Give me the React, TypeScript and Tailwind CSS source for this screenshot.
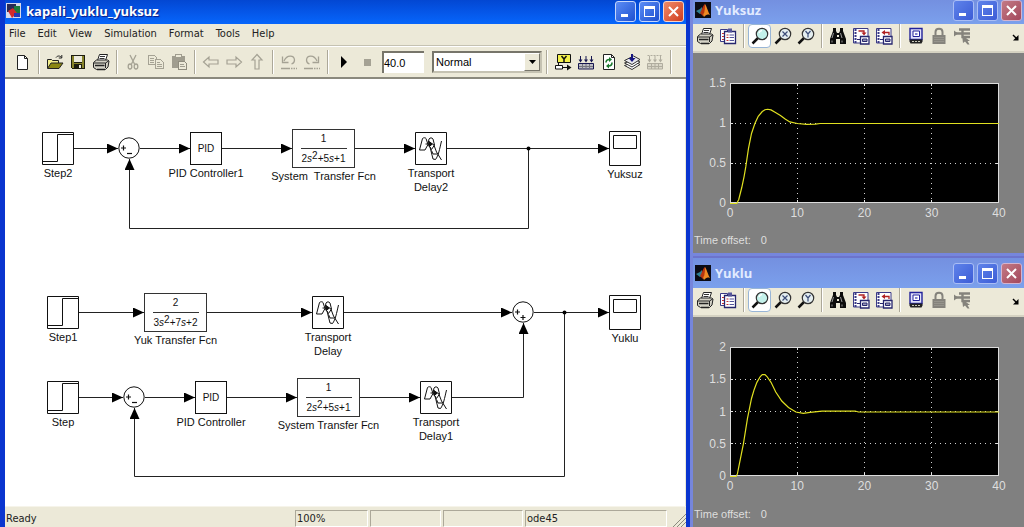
import React, { useState } from "react";
import clsx from "clsx";

type Point = [number, number];

/* ---------- shared bits ---------- */

function Icon({ children, crisp = true }: { children: React.ReactNode; crisp?: boolean }) {
  return (
    <svg
      width="18"
      height="18"
      viewBox="0 0 18 18"
      fill="none"
      aria-hidden="true"
      shapeRendering={crisp ? "crispEdges" : "auto"}
    >
      {children}
    </svg>
  );
}

function ToolButton({
  label,
  pressed = false,
  disabled = false,
  onClick,
  children,
}: {
  label: string;
  pressed?: boolean;
  disabled?: boolean;
  onClick?: () => void;
  children: React.ReactNode;
}) {
  return (
    <button
      type="button"
      title={label}
      aria-label={label}
      disabled={disabled}
      onClick={onClick}
      className={clsx(
        "flex h-6 w-[23px] shrink-0 items-center justify-center",
        pressed && "rounded-sm border border-[#98b5d6] bg-white"
      )}
    >
      {children}
    </button>
  );
}

function Separator() {
  return (
    <div className="flex h-6 w-[9px] shrink-0 justify-center">
      <div className="w-px bg-[#aca899]" />
      <div className="w-px bg-white" />
    </div>
  );
}

function CaptionButtons({ active }: { active: boolean }) {
  const base = "flex size-[21px] items-center justify-center rounded-[3px] border";
  const blue = active
    ? "border-[#c5d6fb] bg-linear-to-br from-[#5b8cf5] to-[#1f4fd0]"
    : "border-[#a9bdf5] bg-linear-to-br from-[#5f83ea] to-[#3d5cd6]";
  const red = active
    ? "border-[#f7d3c8] bg-linear-to-br from-[#f08a68] to-[#cf3a1c]"
    : "border-[#d3b4cf] bg-linear-to-br from-[#c37a86] to-[#a3485c]";
  return (
    <div className="flex gap-[3px]">
      <button type="button" aria-label="Minimize" className={clsx(base, blue)}>
        <svg width="13" height="13" viewBox="0 0 13 13" aria-hidden="true">
          <path d="M2 9h7v3H2z" fill="#fff" />
        </svg>
      </button>
      <button type="button" aria-label="Maximize" className={clsx(base, blue)}>
        <svg width="13" height="13" viewBox="0 0 13 13" aria-hidden="true">
          <path d="M1 1h11v11H1zM2 4v7h9V4z" fill="#fff" fillRule="evenodd" />
        </svg>
      </button>
      <button type="button" aria-label="Close" className={clsx(base, red)}>
        <svg width="13" height="13" viewBox="0 0 13 13" aria-hidden="true">
          <path d="M2 2l9 9M11 2l-9 9" stroke="#fff" strokeWidth="2" />
        </svg>
      </button>
    </div>
  );
}

/* ---------- model toolbar icons ---------- */

const NewIcon = () => (
  <Icon crisp={false}>
    <path d="M3.500 2.500h7l3 3v11h-10z" fill="#fff" stroke="#222" />
    <path d="M10.500 2.500v3h3" stroke="#222" />
  </Icon>
);

const OpenIcon = () => (
  <Icon crisp={false}>
    <path d="M1.500 15V6.500h4l1 1h6V10" fill="#f3ee8a" stroke="#222" />
    <path d="M1.500 15.500l3.500-5.500h12l-4 5.500z" fill="#8b8712" stroke="#222" />
    <path d="M10 4.500c1.500-2 4-2 5.500 0M15.800 2v3h-3" stroke="#222" />
  </Icon>
);

const SaveIcon = () => (
  <Icon>
    <path d="M2 2h14v14H3l-1-1z" fill="#1c1c10" />
    <path d="M3 3h2v7h8V3h2v12H3z" fill="#87842a" />
    <path d="M5 3h8v6H5z" fill="#eceadd" />
    <path d="M5 11h8v4H5z" fill="#1c1c10" />
    <path d="M10 12h2v3h-2z" fill="#eceadd" />
  </Icon>
);

const PrintIcon = () => (
  <Icon crisp={false}>
    <path d="M5.500 7.500l2-6h8l-2 6z" fill="#fff" stroke="#222" />
    <path d="M8 3.500h5M7.500 5.500h5" stroke="#333" />
    <path d="M1.500 9.500l3-2.500h11l1.500 1-1 6-2.500 2.500h-9l-3-2z" fill="#d4d2c6" stroke="#222" />
    <path d="M2 10h11.500v5M13.500 10l3-2" stroke="#222" />
    <path d="M3 12.500h9.500" stroke="#222" strokeWidth="1.500" />
    <path d="M5 16.500h8" stroke="#222" strokeWidth="1.500" />
  </Icon>
);

const CutIcon = () => (
  <Icon crisp={false}>
    <path d="M6 2l4.500 9M12 2L7.500 11" stroke="#a5a294" strokeWidth="1.300" />
    <ellipse cx="6" cy="13.500" rx="1.800" ry="2.500" stroke="#a5a294" strokeWidth="1.300" />
    <ellipse cx="12" cy="13.500" rx="1.800" ry="2.500" stroke="#a5a294" strokeWidth="1.300" />
  </Icon>
);

const CopyIcon = () => (
  <Icon>
    <path d="M1.500 2.500h6l2 2v7h-8z" stroke="#a5a294" />
    <path d="M8.500 6.500h5l3 3v6h-8z" fill="#ece9d8" stroke="#a5a294" />
    <path d="M3 5.500h4M3 7.500h4M3 9.500h4M10 9.500h3M10 11.500h5M10 13.500h5" stroke="#a5a294" />
  </Icon>
);

const PasteIcon = () => (
  <Icon>
    <path d="M2 3h13v12H2z" fill="#a09d8f" />
    <path d="M5.500 1.500h6v3h-6z" fill="#ece9d8" stroke="#a09d8f" />
    <path d="M8.500 8.500h6l2 2v6h-8z" fill="#ece9d8" stroke="#8f8c7e" />
    <path d="M10 11.500h4M10 13.500h5" stroke="#a09d8f" />
  </Icon>
);

const ArrowIcon = ({ turn }: { turn: number }) => (
  <Icon crisp={false}>
    <path
      d="M1.500 9l5.500-5v3h9v4H7v3z"
      stroke="#a5a294"
      strokeWidth="1.200"
      transform={`rotate(${turn} 9 9)`}
    />
  </Icon>
);

const UndoIcon = ({ flip = false }: { flip?: boolean }) => (
  <Icon crisp={false}>
    <g transform={flip ? "matrix(-1 0 0 1 18 0)" : undefined}>
      <path d="M4 8C7 1.500 14 2 14.500 7c0 2.500-1.500 3.500-3 4" stroke="#a5a294" strokeWidth="1.300" />
      <path d="M2.500 3.500v6h6" stroke="#a5a294" strokeWidth="1.300" />
    </g>
    <path d="M1 15.500h9" stroke="#a5a294" strokeWidth="1.500" />
    <path d="M11 15.500h6" stroke="#a5a294" strokeWidth="1.500" strokeDasharray="1.500 1" />
  </Icon>
);

const PlayIcon = () => (
  <Icon crisp={false}>
    <path d="M6 3l6 6-6 6z" fill="#000" />
  </Icon>
);

const StopIcon = () => (
  <Icon>
    <path d="M6 6h7v7H6z" fill="#a5a294" />
  </Icon>
);

const ModelBrowserIcon = () => (
  <Icon crisp={false}>
    <path d="M3.500 1.500h13v8h-13z" fill="#f3f04a" stroke="#111" />
    <path d="M7.500 3l2.500 3 2.500-3M10 6v3" stroke="#111" strokeWidth="1.500" />
    <path d="M1.500 12.500h7v3.500h-7z" fill="#fff" stroke="#111" />
    <path d="M9 14.500h6M4.500 10v2" stroke="#111" />
    <path d="M13 11.500l4.500 3-4.500 3z" fill="#111" />
  </Icon>
);

const BuildIcon = ({ muted = false }: { muted?: boolean }) => {
  const ink = muted ? "#b0ad9f" : "#161650";
  return (
    <Icon crisp={false}>
      <path d="M3.500 3v5M9 3v5M14.500 3v5" stroke={ink} />
      <path d="M1.500 6.500h4l-2 3zM7 6.500h4l-2 3zM12.500 6.500h4l-2 3z" fill={ink} />
      {muted && <path d="M1.500 2.500h15" stroke={ink} strokeDasharray="2 1" />}
      <path d="M1.500 10.500h15v5.500h-15z" fill={muted ? "#dad7c8" : "#bdbdc4"} stroke={ink} />
      <path d="M2 13.500h14M5.500 11v5M9 11v5M12.500 11v5" stroke={muted ? ink : "#77777f"} />
    </Icon>
  );
};

const RefreshIcon = () => (
  <Icon crisp={false}>
    <path d="M3.500 1.500h8l3 3v12h-11z" fill="#fff" stroke="#222" />
    <path d="M11.500 1.500v3h3" stroke="#222" />
    <path d="M6 9.500c0-2 1.500-3 3.500-3M12 9.500c0 2-1.500 3.500-3.500 3.500" stroke="#1d7a2e" strokeWidth="1.600" />
    <path d="M9 4l3 2.500L9 9zM9 10.500L6 13l3 2.500z" fill="#1d7a2e" />
  </Icon>
);

const LibraryIcon = () => (
  <Icon crisp={false}>
    <path d="M1.500 12.500l7.500 4 8-5-5-2.500z" fill="#fff" stroke="#333" />
    <path d="M1.500 10l7.500 4 8-5-5-2.500z" fill="#fff" stroke="#333" />
    <path d="M1.500 7.500l7.500 4 8-5-6.500-3.500z" fill="#e8e8ee" stroke="#333" />
    <path d="M9 1v5" stroke="#161680" strokeWidth="2" />
    <path d="M5.500 5h7L9 9z" fill="#161680" />
  </Icon>
);

/* ---------- scope toolbar icons ---------- */

const ParametersIcon = () => (
  <Icon crisp={false}>
    <path d="M1.500 2.500h7v12h-7z" fill="#fff" stroke="#3a3a86" />
    <path d="M5.500 4.500h11v12h-11z" fill="#fff" stroke="#26266e" strokeWidth="1.300" />
    <path d="M9 1.500h4v4H9z" fill="#55559a" />
    <path d="M3 6.500h2M3 9.500h2M3 12.500h2" stroke="#c03030" />
    <path d="M7.500 8h2M7.500 10.500h2M7.500 13.500h2" stroke="#c03030" />
    <path d="M10.500 8h4.500M10.500 10.500h4.500M10.500 13.500h4.500" stroke="#55559a" />
  </Icon>
);

const ZoomIcon = ({ axis }: { axis?: "x" | "y" }) => (
  <Icon crisp={false}>
    <path d="M1.500 16.500l5.500-5.500" stroke="#111" strokeWidth="2.500" />
    <circle cx="11" cy="7" r="5.700" fill={axis ? "#e4eef0" : "#c4f1ea"} stroke="#333" strokeWidth="1.200" />
    {!axis && <path d="M8 6c.5-1.500 1.500-2.300 3-2.500" stroke="#fff" strokeWidth="1.500" />}
    {axis === "x" && <path d="M8.500 4.500l5 5M13.500 4.500l-5 5" stroke="#3c4c78" strokeWidth="1.200" />}
    {axis === "y" && <path d="M8.500 4l2.500 3 2.500-3M11 7v3.500" stroke="#3c4c78" strokeWidth="1.200" />}
  </Icon>
);

const BinocularsIcon = () => (
  <Icon crisp={false}>
    <path d="M4 1h3v3l1 2h2l1-2V1h3v3l3 8v5h-6v-5H7v5H1v-5l3-8z" fill="#0c0c0c" />
    <path d="M4.500 6L3 11M11.500 6l1.500 5M3 13.500v2M13 13.500v2" stroke="#999" />
    <path d="M8 8h2v2H8z" fill="#ece9d8" />
  </Icon>
);

const AxesIcon = ({ restore = false }: { restore?: boolean }) => (
  <Icon crisp={false}>
    <path d="M1.500 1.500h14.500v14.500h-14.500z" fill="#fff" stroke="#3a3a86" />
    <path d="M3.500 2v14" stroke="#3a3a86" strokeWidth="2" strokeDasharray="2 1" />
    {restore ? (
      <>
        <path d="M14 8V5.500H9" stroke="#b02020" strokeWidth="1.300" />
        <path d="M10 3v5L6.500 5.500z" fill="#b02020" />
      </>
    ) : (
      <>
        <path d="M6.500 4h5.500v3" stroke="#b02020" strokeWidth="1.300" />
        <path d="M9.500 5.500h5L12 8.500z" fill="#b02020" />
      </>
    )}
    <path d="M8.500 9.500h8.500v7.500h-8.500z" fill="#fff" stroke="#26266e" strokeWidth="1.300" />
    <path d="M10.500 12h4.500v2.500h-4.500z" fill="#9a9ab8" stroke="#26266e" />
    <path d="M5 12.500h3" stroke="#26266e" />
  </Icon>
);

const FloatingIcon = () => (
  <Icon crisp={false}>
    <path d="M3 1.500h12v11H3z" fill="#e2e2fa" stroke="#22229a" strokeWidth="1.400" />
    <path d="M6 4h6.500v5.500H6z" fill="#fff" stroke="#22229a" />
    <path d="M8 6h2.500v2H8z" fill="#8080d0" />
    <path d="M2.500 12.500h13v2l-1 2h-11l-1-2z" fill="#222" />
    <path d="M5 14.500h8" stroke="#c8c8b8" strokeDasharray="2 1" />
  </Icon>
);

const LockIcon = () => (
  <Icon crisp={false}>
    <path d="M5.500 8V5c0-4.500 7-4.500 7 0v3" stroke="#85837c" strokeWidth="2" />
    <path d="M2.500 8h13v9h-13z" fill="#85837c" />
    <path d="M4 10.500h10M4 12.500h10M4 14.500h10" stroke="#96948c" />
  </Icon>
);

const SignalIcon = () => (
  <Icon crisp={false}>
    <path d="M1 6.500h6M6 2.500h11M7 6.500h10M9.500 3v7h7.500" stroke="#85837c" strokeWidth="2.400" />
    <path d="M1 3.500l4 3-4 3zM9 8l8 6h-2.500l2 3.500h-2L12 14.500 10 16z" fill="#85837c" />
  </Icon>
);

/* ---------- model window ---------- */

const menus = ["File", "Edit", "View", "Simulation", "Format", "Tools", "Help"];

type BlockKind = "step" | "sum" | "pid" | "tf" | "delay" | "scope";

interface Block {
  id: string;
  kind: BlockKind;
  x: number;
  y: number;
  label?: string[];
  signs?: "+-" | "++";
  num?: string;
  den?: [string, string, string];
}

const blocks: Block[] = [
  { id: "step2", kind: "step", x: 37, y: 53, label: ["Step2"] },
  { id: "sum2", kind: "sum", x: 113, y: 58, signs: "+-" },
  { id: "pid1", kind: "pid", x: 185, y: 53, label: ["PID Controller1"] },
  { id: "tf1", kind: "tf", x: 287, y: 50, num: "1", den: ["2", "5", "1"], label: ["System  Transfer Fcn"] },
  { id: "delay2", kind: "delay", x: 410, y: 53, label: ["Transport", "Delay2"] },
  { id: "yuksuz", kind: "scope", x: 604, y: 52, label: ["Yuksuz"] },
  { id: "step1", kind: "step", x: 42, y: 217, label: ["Step1"] },
  { id: "tfYuk", kind: "tf", x: 139, y: 214, num: "2", den: ["3", "7", "2"], label: ["Yuk Transfer Fcn"] },
  { id: "delay", kind: "delay", x: 307, y: 217, label: ["Transport", "Delay"] },
  { id: "sum1", kind: "sum", x: 507, y: 222, signs: "++" },
  { id: "yuklu", kind: "scope", x: 604, y: 216, label: ["Yuklu"] },
  { id: "step", kind: "step", x: 42, y: 302, label: ["Step"] },
  { id: "sum", kind: "sum", x: 118, y: 307, signs: "+-" },
  { id: "pid", kind: "pid", x: 190, y: 302, label: ["PID Controller"] },
  { id: "tf", kind: "tf", x: 292, y: 299, num: "1", den: ["2", "5", "1"], label: ["System Transfer Fcn"] },
  { id: "delay1", kind: "delay", x: 415, y: 302, label: ["Transport", "Delay1"] },
];

// each wire ends in an arrow head
const wires = [
  "M69 69.500H113",
  "M135 69.500H185",
  "M217 69.500H287",
  "M350 69.500H410",
  "M442 69.500H604",
  "M523.500 69.500V149.500H124.500V80",
  "M74 233.500H139",
  "M202 233.500H307",
  "M339 233.500H507",
  "M529 233.500H604",
  "M559.500 233.500V397.500H129.500V329",
  "M74 318.500H118",
  "M140 318.500H190",
  "M222 318.500H292",
  "M355 318.500H415",
  "M447 318.500H518.500V244",
];

const junctions: Point[] = [
  [523.5, 69.5],
  [559.5, 233.5],
];

function BlockBody({ block }: { block: Block }) {
  switch (block.kind) {
    case "step":
      return (
        <svg width="32" height="33" viewBox="0 0 32 33" fill="none" stroke="#111" aria-hidden="true">
          <path d="M.5.500h31v32H.5z" fill="#fff" />
          <path d="M1 29.500h14.500v-27H31" />
        </svg>
      );
    case "sum":
      return (
        <svg width="22" height="22" viewBox="0 0 22 22" fill="none" stroke="#111" aria-hidden="true">
          <circle cx="11" cy="11" r="10.200" fill="#fff" />
          <path d="M3 11h5M5.500 8.500v5" strokeWidth="1.200" />
          <path d={block.signs === "++" ? "M8.500 16.500h5M11 14v5" : "M9 16.500h5"} strokeWidth="1.200" />
        </svg>
      );
    case "pid":
      return (
        <div className="flex h-[33px] w-8 items-center justify-center border border-[#111] bg-white text-[10px]">
          PID
        </div>
      );
    case "tf":
      return (
        <div className="flex h-[39px] w-[63px] flex-col items-center border border-[#333] bg-white text-[10px] leading-[18px]">
          <span>{block.num}</span>
          <div className="h-px w-[46px] shrink-0 bg-[#333]" />
          <span className="pt-px whitespace-nowrap">
            {block.den![0]}
            <i>s</i>
            <span className="align-[3px] leading-none">2</span>+{block.den![1]}
            <i>s</i>+{block.den![2]}
          </span>
        </div>
      );
    case "delay":
      return (
        <svg width="32" height="33" viewBox="0 0 32 33" fill="none" stroke="#111" aria-hidden="true">
          <path d="M.5.500h31v32H.5z" fill="#fff" />
          <path d="M4.500 18L7.500 6.500c1-1 3-1 3.500 0l2 6-3 5.500z" />
          <path d="M13 12l1-5c1-1.500 3-1.500 4 0l1.500 6-3 4.500-3.500-5.500" />
          <path d="M15 15l3 12 2.500.500c3-4 4-10 6-18.500M18.500 12l3 8 5 8M16.500 18.500l1.500 3.500h4" />
          <path d="M10.500 12h7M14 9.500l3.500 2.500-3.500 2.500z" fill="#111" />
        </svg>
      );
    case "scope":
      return (
        <svg width="32" height="35" viewBox="0 0 32 35" fill="none" stroke="#111" aria-hidden="true">
          <path d="M.5.500h31v34H.5z" fill="#fff" />
          <path d="M4.500 4.500h23v13h-23z" />
        </svg>
      );
  }
}

function Diagram() {
  return (
    <div className="relative min-h-[420px] flex-1 overflow-hidden border-r border-[#ece9d8] bg-white">
      <svg className="absolute top-0 left-0" width="680" height="420" viewBox="0 0 680 420" fill="none" aria-hidden="true">
        <defs>
          <marker id="arrow" markerUnits="userSpaceOnUse" markerWidth="11" markerHeight="10" refX="11" refY="5" orient="auto">
            <path d="M0 0l11 5-11 5z" fill="#000" />
          </marker>
        </defs>
        {wires.map((d) => (
          <path key={d} d={d} stroke="#222" markerEnd="url(#arrow)" />
        ))}
        {junctions.map(([x, y]) => (
          <circle key={x} cx={x} cy={y} r="2" fill="#000" />
        ))}
      </svg>
      {blocks.map((b) => (
        <div key={b.id} className="absolute" style={{ left: b.x, top: b.y }}>
          <div className="flex w-min flex-col items-center">
            <BlockBody block={b} />
            {b.label && (
              <div className="flex w-0 flex-col items-center pt-px text-[11px] leading-[14px] whitespace-pre">
                {b.label.map((line) => (
                  <span key={line}>{line}</span>
                ))}
              </div>
            )}
          </div>
        </div>
      ))}
    </div>
  );
}

const statusCell = "h-[17px] border border-r-white border-b-white border-t-[#aca899] border-l-[#aca899]";

function ModelWindow() {
  const [stopTime, setStopTime] = useState("40.0");
  const [mode, setMode] = useState("Normal");

  return (
    <section className="flex min-w-0 flex-1 flex-col border-r-4 border-l-[5px] border-[#0a35cf] bg-[#ece9d8]">
      <header className="flex h-6 items-center justify-between bg-linear-to-b from-[#0347d2] via-[#0556e8] to-[#0766fb] pr-[2px] pb-[2px]">
        <div className="flex items-center gap-1">
          <svg width="17" height="16" viewBox="0 0 17 16" aria-hidden="true">
            <path d="M1 0h15v15H1z" fill="#d8d8ea" />
            <path d="M2 1h9v8H2z" fill="#2a2a55" />
            <path d="M9 3h6v7H9z" fill="#1c7a3c" />
            <path d="M3 8l5-3 4 5-5 5z" fill="#d42a2a" />
            <path d="M9 10h6v4H9z" fill="#2438b4" />
          </svg>
          <h1 className="font-['Open_Sans',sans-serif] text-[13px] leading-5 font-bold text-white [text-shadow:1px_1px_1px_#0a1883]">
            kapali_yuklu_yuksuz
          </h1>
        </div>
        <CaptionButtons active />
      </header>

      <nav className="flex h-[22px] items-center gap-3 border-b border-[#c5c2b2] px-1 font-['DejaVu_Sans_Condensed','DejaVu_Sans',sans-serif] text-[11px] text-[#222]">
        {menus.map((m) => (
          <button key={m} type="button">
            {m}
          </button>
        ))}
      </nav>

      <div className="flex h-[33px] items-center border-t border-b-2 border-t-white border-b-[#8b897d] px-[6px]">
        <ToolButton label="New model"><NewIcon /></ToolButton>
        <Separator />
        <ToolButton label="Open model"><OpenIcon /></ToolButton>
        <ToolButton label="Save"><SaveIcon /></ToolButton>
        <ToolButton label="Print"><PrintIcon /></ToolButton>
        <Separator />
        <ToolButton label="Cut" disabled><CutIcon /></ToolButton>
        <ToolButton label="Copy" disabled><CopyIcon /></ToolButton>
        <ToolButton label="Paste" disabled><PasteIcon /></ToolButton>
        <Separator />
        <ToolButton label="Back" disabled><ArrowIcon turn={0} /></ToolButton>
        <ToolButton label="Forward" disabled><ArrowIcon turn={180} /></ToolButton>
        <ToolButton label="Up" disabled><ArrowIcon turn={90} /></ToolButton>
        <Separator />
        <ToolButton label="Undo" disabled><UndoIcon /></ToolButton>
        <ToolButton label="Redo" disabled><UndoIcon flip /></ToolButton>
        <Separator />
        <ToolButton label="Start simulation"><PlayIcon /></ToolButton>
        <ToolButton label="Stop simulation" disabled><StopIcon /></ToolButton>
        <input
          aria-label="Simulation stop time"
          value={stopTime}
          onChange={(e) => setStopTime(e.target.value)}
          className="ml-1 h-[22px] w-[42px] shrink-0 border-t-2 border-l-2 border-[#77756a] bg-white text-[11px] text-black outline-none"
        />
        <div className="relative ml-2 w-[110px] shrink-0">
          <select
            aria-label="Simulation mode"
            value={mode}
            onChange={(e) => setMode(e.target.value)}
            className="block h-[22px] w-full appearance-none border-2 border-t-[#77756a] border-r-[#c5c2b2] border-b-[#c5c2b2] border-l-[#77756a] bg-white pl-[2px] text-[11px] text-black outline-none"
          >
            <option>Normal</option>
            <option>Accelerator</option>
            <option>External</option>
          </select>
          <div className="pointer-events-none absolute top-[2px] right-[2px] flex h-[18px] w-4 items-center justify-center border border-t-white border-r-[#77756a] border-b-[#77756a] border-l-white bg-[#ece9d8]">
            <svg width="7" height="4" viewBox="0 0 7 4" aria-hidden="true">
              <path d="M0 0h7L3.500 4z" fill="#000" />
            </svg>
          </div>
        </div>
        <Separator />
        <ToolButton label="Library browser"><ModelBrowserIcon /></ToolButton>
        <ToolButton label="Incremental build"><BuildIcon /></ToolButton>
        <ToolButton label="Refresh blocks"><RefreshIcon /></ToolButton>
        <ToolButton label="Update diagram"><LibraryIcon /></ToolButton>
        <ToolButton label="Build subsystem" disabled><BuildIcon muted /></ToolButton>
        <Separator />
      </div>

      <Diagram />

      <footer className="flex h-[21px] items-center gap-[2px] border-t border-[#f6f4ea] pt-[2px] font-['DejaVu_Sans_Condensed','DejaVu_Sans',sans-serif] text-[11px] leading-[15px] text-[#222]">
        <span className="flex-1 pl-px">Ready</span>
        <span className={clsx(statusCell, "w-[73px] pl-px")}>100%</span>
        <span className={clsx(statusCell, "w-[71px]")} />
        <span className={clsx(statusCell, "w-[80px]")} />
        <span className={clsx(statusCell, "w-[142px] pl-px")}>ode45</span>
        <svg width="17" height="17" viewBox="0 0 17 17" stroke="#8b897d" aria-hidden="true">
          <path d="M4 17L17 4M8 17l9-9M12 17l5-5" />
        </svg>
      </footer>
    </section>
  );
}

/* ---------- scope windows ---------- */

const yuksuzTrace: Point[] = [
  [0, 0], [1, 0], [1.3, 0.05], [1.75, 0.2], [2.1, 0.34], [2.35, 0.46], [2.75, 0.69], [3.2, 0.875],
  [3.7, 1], [4.2, 1.09], [4.8, 1.15], [5.2, 1.172], [5.6, 1.178], [6.1, 1.17], [6.7, 1.14],
  [7.5, 1.1], [8.2, 1.055], [8.9, 1.02], [10, 1], [11.4, 0.988], [12.7, 0.992], [13.4, 1], [40, 1],
];

const yukluTrace: Point[] = [
  [0, 0], [0.9, 0], [1.1, 0.04], [1.3, 0.146], [2, 0.51], [2.6, 0.9], [3.2, 1.21], [3.6, 1.35],
  [4, 1.46], [4.5, 1.55], [4.8, 1.58], [5.2, 1.58], [5.5, 1.55], [6.1, 1.46], [6.8, 1.31],
  [7.7, 1.17], [8.7, 1.07], [9.8, 1], [10.9, 0.98], [11.9, 0.995], [13.7, 1.015], [18.6, 1.015],
  [19.1, 1], [40, 1],
];

const LEFT = 37;
const TOP = 30;
const PLOT_W = 269;

function ScopeChart({
  trace,
  yMax,
  plotHeight,
  height,
}: {
  trace: Point[];
  yMax: number;
  plotHeight: number;
  height: number;
}) {
  const sx = (t: number) => LEFT + (t / 40) * PLOT_W;
  const sy = (v: number) => TOP + plotHeight * (1 - v / yMax);
  // centre of the pixel row or column that holds a value
  const px = (n: number) => Math.floor(n) + 0.5;
  const yTicks: number[] = [];
  for (let v = 0; v <= yMax; v += 0.5) yTicks.push(v);

  return (
    <svg viewBox={`0 0 331 ${height}`} className="block w-full" role="img" aria-label="Scope output">
      <rect x={LEFT} y={TOP} width={PLOT_W} height={plotHeight} fill="#000" />
      <g stroke="#d0d0d0" strokeDasharray="1 4">
        {[10, 20, 30].map((t) => (
          <path key={t} d={`M${px(sx(t))} ${TOP}v${plotHeight}`} />
        ))}
        {yTicks.slice(1, -1).map((v) => (
          <path key={v} d={`M${LEFT} ${px(sy(v))}h${PLOT_W}`} />
        ))}
      </g>
      <g stroke="#e4e4e4">
        {[10, 20, 30].map((t) => (
          <path key={t} d={`M${px(sx(t))} ${TOP}v3m0 ${plotHeight - 6}v3`} />
        ))}
        {yTicks.slice(1, -1).map((v) => (
          <path key={v} d={`M${LEFT} ${px(sy(v))}h3m${PLOT_W - 6} 0h3`} />
        ))}
      </g>
      <rect x={LEFT + 0.5} y={TOP + 0.5} width={PLOT_W - 1} height={plotHeight - 1} fill="none" stroke="#dcdcdc" />
      <polyline
        points={trace.map(([t, v]) => `${sx(t)},${sy(v) + 0.5}`).join(" ")}
        fill="none"
        stroke="#e0e020"
        strokeWidth="1.200"
      />
      <g fill="#dedede" className="text-[12px]">
        {yTicks.map((v) => (
          <text key={v} x={LEFT - 4} y={sy(v) + 4} textAnchor="end">
            {v}
          </text>
        ))}
        {[0, 10, 20, 30, 40].map((t) => (
          <text key={t} x={sx(t)} y={TOP + plotHeight + 14} textAnchor="middle">
            {t}
          </text>
        ))}
      </g>
    </svg>
  );
}

function ScopeWindow({
  title,
  cut = false,
  className,
  children,
}: {
  title: string;
  cut?: boolean;
  className?: string;
  children: React.ReactNode;
}) {
  const [zoom, setZoom] = useState("xy");

  return (
    <section className={clsx("flex flex-col border-l-[3px] border-[#7686dc] bg-[#808080]", className)}>
      <header
        className={clsx(
          "flex items-center justify-between bg-linear-to-b from-[#7490e0] to-[#7ba0ec] pr-[2px] pl-[2px]",
          cut ? "h-6 pb-[4px]" : "h-8 border-t-2 border-[#6c74cc]"
        )}
      >
        <div className="flex items-center gap-1">
          <svg width="16" height="16" viewBox="0 0 16 16" aria-hidden="true">
            <path d="M0 0h16v16H0z" fill="#0b0b14" />
            <path d="M1 9l4-2 2-2v6l-2 1z" fill="#2f7f92" />
            <path d="M5 11c2-3 3-8 5-9l1 5-3 7z" fill="#b8340f" />
            <path d="M10 2c2 3 3 8 5 11-3-1-4 0-6 2l-1-2c2-3 2-8 2-11z" fill="#ef8a24" />
          </svg>
          <h2 className="font-['Open_Sans',sans-serif] text-[13px] leading-5 font-bold text-[#e2ebff]">{title}</h2>
        </div>
        <CaptionButtons active={false} />
      </header>

      <div className="flex h-[29px] items-start justify-between border-b-2 border-[#d5d2c2] bg-[#ece9d8]">
        <div className="flex">
          <ToolButton label="Print"><PrintIcon /></ToolButton>
          <ToolButton label="Parameters"><ParametersIcon /></ToolButton>
          <Separator />
          <ToolButton label="Zoom" pressed={zoom === "xy"} onClick={() => setZoom("xy")}><ZoomIcon /></ToolButton>
          <ToolButton label="Zoom X-axis" pressed={zoom === "x"} onClick={() => setZoom("x")}><ZoomIcon axis="x" /></ToolButton>
          <ToolButton label="Zoom Y-axis" pressed={zoom === "y"} onClick={() => setZoom("y")}><ZoomIcon axis="y" /></ToolButton>
          <Separator />
          <ToolButton label="Autoscale"><BinocularsIcon /></ToolButton>
          <ToolButton label="Save axes settings"><AxesIcon /></ToolButton>
          <ToolButton label="Restore axes settings"><AxesIcon restore /></ToolButton>
          <Separator />
          <ToolButton label="Floating scope"><FloatingIcon /></ToolButton>
          <ToolButton label="Lock axes" disabled><LockIcon /></ToolButton>
          <ToolButton label="Signal selection" disabled><SignalIcon /></ToolButton>
        </div>
        <button type="button" aria-label="Dock" className="flex h-[26px] items-center pr-[5px]">
          <svg width="7" height="7" viewBox="0 0 7 7" aria-hidden="true">
            <path d="M1 1l4 4" stroke="#000" strokeWidth="1.500" />
            <path d="M6.500 1v5.500H1z" fill="#000" />
          </svg>
        </button>
      </div>

      <div className="flex-1 text-[#dedede]">
        {children}
        <p className="flex gap-2.5 pt-[9px] pb-[5px] pl-px text-[11px] leading-4">
          <span>Time offset:</span>
          <span>0</span>
        </p>
      </div>
    </section>
  );
}

export default function App() {
  return (
    <main className="flex min-h-screen bg-[#7686dc] font-['Liberation_Sans',Arial,sans-serif] text-[#111]">
      <ModelWindow />
      <div className="flex w-[334px] shrink-0 flex-col">
        <ScopeWindow title="Yuksuz" cut className="border-b-[3px]">
          <ScopeChart trace={yuksuzTrace} yMax={1.5} plotHeight={120} height={170} />
        </ScopeWindow>
        <ScopeWindow title="Yuklu" className="flex-1">
          <ScopeChart trace={yukluTrace} yMax={2} plotHeight={129} height={180} />
        </ScopeWindow>
      </div>
    </main>
  );
}
